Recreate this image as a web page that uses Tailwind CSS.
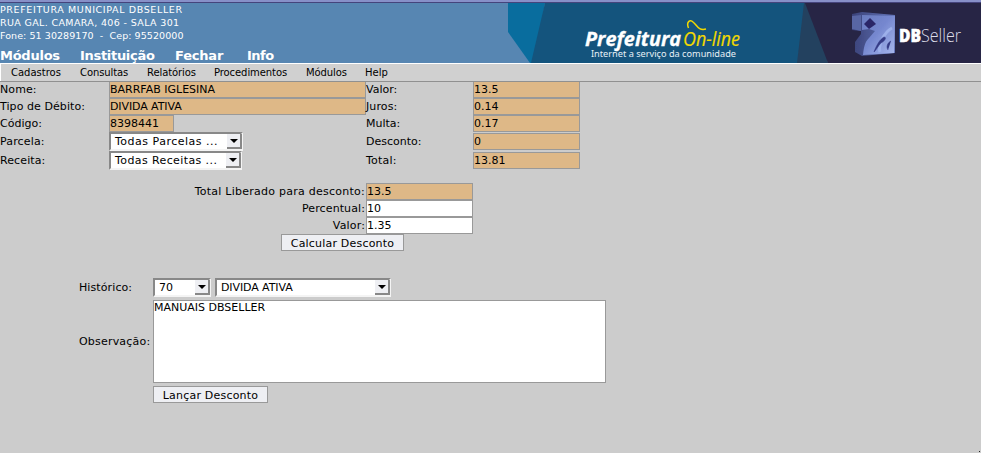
<!DOCTYPE html>
<html lang="pt-BR">
<head>
<meta charset="utf-8">
<title>Prefeitura On-line</title>
<script src="https://cdn.jsdelivr.net/npm/@tailwindcss/browser@4"></script>
</head>
<body class="w-[981px] h-[453px] overflow-hidden bg-[#cccccc] text-black text-[11px] leading-[15px] font-['DejaVu_Sans',sans-serif] whitespace-nowrap">
<header class="relative h-[63px] bg-[#5786b2] border-t-2 border-[#8790c8] text-white overflow-hidden">
  <svg class="absolute right-0 top-0" width="491" height="61" viewBox="490 2 491 61">
    <defs>
      <linearGradient id="cube" x1="0" y1="0" x2="1" y2="1"><stop offset="0" stop-color="#6a7cbf"/><stop offset=".45" stop-color="#7587cf"/><stop offset="1" stop-color="#a9b9ee"/></linearGradient>
      <linearGradient id="side" x1="0" y1="0" x2="1" y2="0"><stop offset="0" stop-color="#3a4279"/><stop offset="1" stop-color="#6475b9"/></linearGradient>
      <filter id="soft"><feGaussianBlur stdDeviation=".6"/></filter>
    </defs>
    <path d="M508 3H545L535 63H530L508 32Z" fill="#096d9e"/>
    <path d="M545 3H805V63H531Z" fill="#14547d"/>
    <path d="M804 3H820L828 63H797Z" fill="#23415f"/>
    <path d="M805 3H981V63H828Z" fill="#272545"/>
    <text x="585" y="46" textLength="96" lengthAdjust="spacingAndGlyphs" font-family="Open Sans" font-size="19" font-weight="700" font-style="italic" fill="#fff" stroke="#fff" stroke-width=".3">Prefeitura</text>
    <text x="683" y="46" textLength="57" lengthAdjust="spacingAndGlyphs" font-family="Open Sans" font-size="20.5" font-style="italic" fill="#f2d900" stroke="#f2d900" stroke-width=".2">On-line</text>
    <path d="M688.5 28C686 22 690 19 693 22C697 25 698 31 706 29" fill="none" stroke="#f2d900" stroke-width="1.5"/>
    <text x="591" y="57" textLength="145" lengthAdjust="spacingAndGlyphs" font-family="Noto Sans" font-size="9.6" fill="#e6f0f6">Internet a serviço da comunidade</text>
    <g filter="url(#soft)">
      <path d="M852 14L862 12L895 15V53L862 56L855 52L855 42L861 34V31L852 30Z" fill="url(#side)"/>
      <path d="M862 15L895 16L894 53L863 55C864 46 865 42 869 38L875 31L869 29L862 30Z" fill="url(#cube)"/>
      <path d="M852 16L861 15V31L852 29Z" fill="#5866a4"/>
      <path d="M870 18L876 24L869 29L864 24Z" fill="#2a2568"/>
      <path d="M880 52C878 46 884 32 892 28" fill="none" stroke="#9db0ea" stroke-width="3"/>
      <path d="M874 52C876 46 880 39 884 37C887 37 885 41 881 43C878 46 877 49 874 52M888 50C886 47 887 43 891 41" fill="#343b86" stroke="#343b86" stroke-width=".5"/>
    </g>
    <text x="899" y="42" textLength="22" lengthAdjust="spacingAndGlyphs" font-family="Open Sans" font-size="17" font-weight="800" fill="#fff" stroke="#fff" stroke-width=".5">DB</text>
    <text x="921" y="42" textLength="40" lengthAdjust="spacingAndGlyphs" font-family="Open Sans" font-size="18" font-weight="300" fill="#dddde9">Seller</text>
  </svg>
  <div class="relative border-t border-[#45447c]">
    <div class="text-[9.5px] leading-[13px]">
      <p class="tracking-[0.63px]">PREFEITURA MUNICIPAL DBSELLER</p>
      <p class="tracking-[0.36px]">RUA GAL. CAMARA, 406 - SALA 301</p>
      <p class="tracking-[0.07px] whitespace-pre">Fone: 51 30289170  -  Cep: 95520000</p>
    </div>
    <nav class="flex pt-[6px] text-[13px] leading-[15px] font-bold">
      <a class="w-[80px] tracking-[-0.25px]">Módulos</a><a class="w-[95px] tracking-[-0.3px]">Instituição</a><a class="w-[72px] tracking-[-0.2px]">Fechar</a><a class="tracking-[-0.5px]">Info</a>
    </nav>
  </div>
</header>
<nav class="flex h-[18px] pl-[10px] pt-px bg-[#d0d0d0] border-t border-l border-t-white border-l-white text-[10px] leading-[15px]">
  <a class="w-[69px]">Cadastros</a><a class="w-[67px] tracking-[-0.1px]">Consultas</a><a class="w-[67px] tracking-[-0.1px]">Relatórios</a><a class="w-[92px] tracking-[-0.08px]">Procedimentos</a><a class="w-[59px] tracking-[-0.1px]">Módulos</a><a>Help</a>
</nav>
<main>
  <section class="grid grid-cols-[109px_257px_107px_107px] grid-rows-[16px_17px_17px_19px_19px] items-center border-t border-[#909090]">
    <label class="tracking-[0.1px] pb-px">Nome:</label><div class="h-[16px] bg-[#deb887] border border-t-0 border-[#999]">BARRFAB IGLESINA</div>
    <label class="pb-px">Valor:</label><div class="h-[16px] bg-[#deb887] border border-t-0 border-[#999]">13.5</div>
    <label class="tracking-[0.07px]">Tipo de Débito:</label><div class="h-[17px] bg-[#deb887] border border-[#999] tracking-[-0.1px]">DIVIDA ATIVA</div>
    <label class="tracking-[0.1px]">Juros:</label><div class="h-[17px] bg-[#deb887] border border-[#999]">0.14</div>
    <label>Código:</label><div class="h-[17px] w-[65px] bg-[#deb887] border border-[#999]">8398441</div>
    <label>Multa:</label><div class="h-[17px] bg-[#deb887] border border-[#999]">0.17</div>
    <label class="tracking-[0.15px]">Parcela:</label>
    <div class="flex justify-between w-[134px] h-[19px] bg-white border-2 border-t-[#888] border-l-[#888] border-r-[#f4f4f4] border-b-[#f4f4f4] pl-[4px] tracking-[0.5px]"><span>Todas Parcelas ...</span><svg class="-mr-px" width="15" height="15"><path d="M0 0H15V15H0Z" fill="#888"/><path d="M0 0H13V13H0Z" fill="#eeeff3"/><path d="M3 5H11L7 9Z"/></svg></div>
    <label>Desconto:</label><div class="h-[17px] bg-[#deb887] border border-[#999]">0</div>
    <label class="tracking-[0.1px]">Receita:</label>
    <div class="flex justify-between w-[133px] h-[19px] bg-white border-2 border-t-[#888] border-l-[#888] border-r-[#f4f4f4] border-b-[#f4f4f4] pl-[4px] tracking-[0.4px]"><span>Todas Receitas ...</span><svg class="-mr-px" width="15" height="15"><path d="M0 0H15V15H0Z" fill="#888"/><path d="M0 0H13V13H0Z" fill="#eeeff3"/><path d="M3 5H11L7 9Z"/></svg></div>
    <label class="tracking-[0.2px]">Total:</label><div class="h-[17px] bg-[#deb887] border border-[#999]">13.81</div>
  </section>
  <section class="mt-[13px]">
    <div class="grid grid-cols-[366px_107px] auto-rows-[17px] items-center">
      <label class="text-right pr-px tracking-[0.25px]">Total Liberado para desconto:</label><div class="h-[17px] bg-[#deb887] border border-[#999]">13.5</div>
      <label class="text-right pr-px tracking-[0.1px]">Percentual:</label><div class="h-[17px] bg-white border border-[#999]">10</div>
      <label class="text-right pr-px tracking-[0.15px]">Valor:</label><div class="h-[17px] bg-white border border-[#999]">1.35</div>
    </div>
    <button class="block ml-[281px] w-[123px] h-[17px] bg-[#eeeff3] border border-[#999] text-center leading-[17px] tracking-[0.2px]">Calcular Desconto</button>
  </section>
  <section class="mt-[27px] ml-[79px]">
    <div class="flex items-center h-[19px]">
      <label class="w-[74px] tracking-[0.1px]">Histórico:</label>
      <div class="flex justify-between w-[58px] h-[19px] mr-[4px] bg-white border-2 border-t-[#888] border-l-[#888] border-r-[#f4f4f4] border-b-[#f4f4f4] pl-[4px]"><span>70</span><svg class="-mr-px" width="15" height="15"><path d="M0 0H15V15H0Z" fill="#888"/><path d="M0 0H13V13H0Z" fill="#eeeff3"/><path d="M3 5H11L7 9Z"/></svg></div>
      <div class="flex justify-between w-[176px] h-[19px] bg-white border-2 border-t-[#888] border-l-[#888] border-r-[#f4f4f4] border-b-[#f4f4f4] pl-[4px] tracking-[-0.1px]"><span>DIVIDA ATIVA</span><svg class="-mr-px" width="15" height="15"><path d="M0 0H15V15H0Z" fill="#888"/><path d="M0 0H13V13H0Z" fill="#eeeff3"/><path d="M3 5H11L7 9Z"/></svg></div>
    </div>
    <div class="flex items-center mt-[3px]">
      <label class="w-[74px] tracking-[0.2px]">Observação:</label>
      <div class="w-[453px] h-[83px] bg-white border border-[#999] leading-[13px]">MANUAIS DBSELLER</div>
    </div>
    <button class="block mt-[3px] ml-[74px] w-[115px] h-[17px] bg-[#eeeff3] border border-[#999] text-center leading-[17px] tracking-[0.2px]">Lançar Desconto</button>
  </section>
</main>
<i class="absolute left-[979px] top-[451px] size-px bg-[#222]"></i>
</body>
</html>
